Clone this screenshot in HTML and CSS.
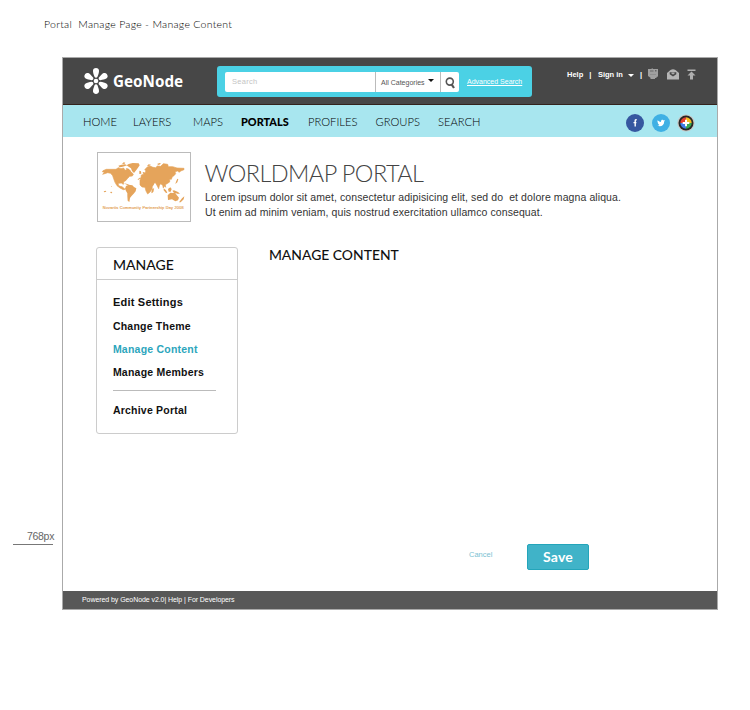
FILE: index.html
```html
<!DOCTYPE html>
<html lang="en">
<head>
<meta charset="utf-8">
<title>Portal Manage Page - Manage Content</title>
<link rel="stylesheet" href="styles.css">
</head>
<body>
<p class="caption">Portal&nbsp; Manage Page - Manage Content</p>
<div class="board">
  <div class="ruler"><span>768px</span></div>
  <div class="frame">
    <header class="top">
      <a class="brand">
        <svg width="26" height="28" viewBox="-13 -14 26 28">
          <g fill="#fff">
            <path id="petal" d="M-1.500-4.200C-2.200-6.5-3.200-8.500-3-10.600C-2.600-13.700 2.600-13.700 3-10.600C3.200-8.500 2.200-6.5 1.500-4.200C.8-3 -.8-3-1.500-4.200Z"/>
            <use href="#petal" transform="rotate(60)"/><use href="#petal" transform="rotate(120)"/>
            <use href="#petal" transform="rotate(180)"/><use href="#petal" transform="rotate(240)"/>
            <use href="#petal" transform="rotate(300)"/>
            <circle r="2.3"/>
          </g>
        </svg>
        <span>GeoNode</span>
      </a>
      <div class="search">
        <div class="field">
          <span class="query">Search</span>
          <span class="cats">All Categories<i class="caret"></i></span>
          <span class="go"><svg width="12" height="14" viewBox="0 0 12 14" fill="none" stroke="#555"><circle cx="4.800" cy="4.600" r="3.500" stroke-width="1.600"/><path d="M6.600 7.400l2.400 3.600" stroke-width="2.2"/></svg></span>
        </div>
        <a class="adv">Advanced Search</a>
      </div>
      <div class="user">
        <a class="help">Help</a><span class="bar">|</span><a class="sign">Sign in</a><i class="caret light"></i><span class="bar">|</span>
        <svg class="ic1" width="12" height="12" viewBox="0 0 12 12"><path d="M1 1h3.200l1-.8 1 .8H11v7.500L9.500 9v1H8v1H3.500V9.800L1 8z" fill="#a0a0a0"/><path d="M3 2.600h3.500v1H3zM8 2h1.500v1.500H8z" fill="#666"/><path d="M3 6.300h6v.7H3z" fill="#888"/></svg>
        <svg class="ic2" width="12" height="11" viewBox="0 0 12 11"><path d="M0 4L3.500 1Q6-.6 8.500 1L12 4V10.500H0z" fill="#b5b5b5"/><path d="M2.700 3.200h6.600v2L6 7.400 2.700 5.200z" fill="#474747"/><path d="M4.500 3.500h3v1.300L6 5.600 4.500 4.800z" fill="#aaa"/></svg>
        <svg class="ic3" width="9" height="11" viewBox="0 0 9 11"><path d="M.5.5h8v1.6h-8zM4.5 2.6l4 4H6V10.500H3V6.600H.5z" fill="#b0b0b0"/></svg>
      </div>
    </header>
    <nav class="nav">
      <a>HOME</a><a>LAYERS</a><a>MAPS</a><a class="on">PORTALS</a><a>PROFILES</a><a>GROUPS</a><a>SEARCH</a>
      <div class="social">
        <svg width="18" height="18" viewBox="0 0 18 18"><circle cx="9" cy="9" r="9" fill="#3657a0"/><path d="M10.700 5.800H9.900Q9.200 5.800 9.200 6.600V12.500M7.500 8.600h2.900" fill="none" stroke="#fff" stroke-width="1.4"/></svg>
        <svg width="18" height="18" viewBox="0 0 18 18"><circle cx="9" cy="9" r="9" fill="#3fb0e4"/><path d="M5.600 6.200Q7.200 7.900 9 7.900C8.800 5.500 11 5.300 11.700 6.400L13 6.100 12.200 7.400C12.300 11.600 8.600 13 5.400 11.600Q6.700 11.600 7.400 11L5.700 9.600 6.300 9.400Q5 8 5.600 6.200Z" fill="#fff"/></svg>
        <svg width="18" height="18" viewBox="0 0 18 18"><circle cx="9" cy="9" r="8.600" fill="#c9c4c0"/><circle cx="9" cy="9" r="7.500" fill="#262626"/><path d="M9 9V3.300A5.700 5.700 0 0 0 3.300 9z" fill="#e5402e"/><path d="M9 9V3.300A5.700 5.700 0 0 1 14.700 9z" fill="#f5bd22"/><path d="M9 9H3.300A5.700 5.700 0 0 0 9 14.700z" fill="#3f7ce8"/><path d="M9 9h5.700A5.700 5.700 0 0 1 9 14.700z" fill="#38a852"/><path d="M9 5.700v6.600M5.700 9h6.600" stroke="#fff" stroke-width="2"/></svg>
      </div>
    </nav>
    <section class="intro">
      <div class="thumb">
        <svg width="92" height="68" viewBox="24 24 276 204" fill="#e5a45b">
          <path stroke="#e5a45b" stroke-width="2" d="M39 77l10-4 14 0 15 0 7-5 8 3 8-2 4 7 9-4 4 6 6 3 6 7-3 5-8 1-7 7-5 6-6 3-1 8-6-4-9 1 0 6 5 3 6 1 5 4 4 4-5 1-10-5-9-7-6-10-4-11-3-9-6-7-9-2-9 3-6 2 5-6-6-2z"/>
          <path d="M85 62l10-3 10-1 6 3-8 3-8 2-6 1zM116 57l12-3 18 1 3 6-4 6-6 8-7 9-6-6-3-8-7-5-6-4zM107 69l9 2 7 7-2 4-8-5zM108 123l8-4 11 2 5 5 7 4-2 9-6 7-7 8-4 5-2 12-5-4-1-14 0-8-4-7-3-7z"/>
          <path stroke="#e5a45b" stroke-width="2" d="M150 104l6-5 12-2 7 4 8 0 5 8 7 2-5 8-3 5-1 8-6 9-7 6-5-9-3-11-9-1-6-6zM187 132l4-1-2 10-4 2z"/>
          <path stroke="#e5a45b" stroke-width="2" d="M153 98l1-8 7-2-2-6 6 2 3-7-4-3 8-8 8-3 9 4 8 1 5-5 10 1 8-8 13 2 2 7 13 0 13 4 21 1 0 4-10 4-4 4-5-4-8 2 2 6-5 6-5 3-3 8-5-1 0 9-8 5-5 3 1 8-4-4-3 6-2-8-6-5-4 6-2 9-4-8-5-9-7-3-5 0 6 5-4 7-9 2-7-9-1-9-8 0-7-4-6-4-5 5z"/>
          <path d="M148 77l5 2 1 7-6 1zM221 130l7 6 4 7-4 1-7-8zM234 132l7-5 4 5-3 8-6 0zM247 137l5-1 12 5 6 5-8 0-12-5zM233 151l8-8 8 1 5-3 6 9 7 8-3 8-8 3-10-6-12 2zM276 160l7-6-2 9-9 9-5 0zM258 110l4-9 3 2-3 9-6 5zM171 62l5-4 7 1-6 4zM201 57l8-3 4 2-7 4zM41 139l6-2 2 3-6 2zM60 141l5-1 2 4-4 1zM63 124l3-1 0 3zM101 115l11 2 6 3-6 0zM96 56l5-4 5 1-3 4z"/>
          <text x="38" y="193" font-size="11.500" textLength="243" stroke="#e5a45b" stroke-width=".5">Novartis Community Partnership Day 2008</text>
        </svg>
      </div>
      <div class="copy">
        <h1>WORLDMAP PORTAL</h1>
        <p>Lorem ipsum dolor sit amet, consectetur adipisicing elit, sed do&nbsp; et dolore magna aliqua.</p>
        <p>Ut enim ad minim veniam, quis nostrud exercitation ullamco consequat.</p>
      </div>
    </section>
    <main class="main">
      <aside class="menu">
        <h2>MANAGE</h2>
        <ul>
          <li class="m1">Edit Settings</li><li>Change Theme</li><li class="m3">Manage Content</li><li>Manage Members</li>
          <li class="m5">Archive Portal</li>
        </ul>
      </aside>
      <h2 class="title">MANAGE CONTENT</h2>
    </main>
    <div class="actions"><a>Cancel</a><button>Save</button></div>
    <footer class="foot">Powered by GeoNode v2.0| Help | For Developers</footer>
  </div>
</div>
</body>
</html>
```
FILE: styles.css
```css
* { box-sizing: border-box; }
body { margin: 0; width: 750px; height: 710px; background: #fff; color: #222; font-family: "Liberation Sans", Arial, sans-serif; overflow: hidden; }
h1, h2, p, ul { margin: 0; padding: 0; font-weight: 400; }
svg { display: block; flex: none; }
.caption { height: 57px; padding: 16px 0 0 44px; font: 300 10.500px/16px Lato, sans-serif; letter-spacing: .28px; color: #000; white-space: nowrap; }
.board { display: flex; height: 553px; }
.ruler { width: 62px; padding: 473px 9px 0 13px; }
.ruler span { display: block; height: 15px; border-bottom: 1px solid #777; padding-left: 14px; font-size: 10.500px; letter-spacing: -.3px; line-height: 13px; color: #666; white-space: nowrap; }
.frame { width: 656px; height: 553px; border: 1px solid #aaa; display: flex; flex-direction: column; }
.top { height: 47px; background: #474747; border-bottom: 1px solid #33231d; display: flex; align-items: flex-start; flex: none; }
.brand { display: flex; width: 154px; padding: 9px 0 0 20px; color: #fff; }
.brand span { font: 700 15.200px/28px "Noto Sans", sans-serif; margin-left: 4px; }
.search { width: 315px; height: 31px; margin-top: 8px; padding-left: 8px; background: #4bd1e5; border-radius: 3px; display: flex; align-items: center; }
.field { width: 234px; height: 20px; display: flex; background: #fff; border-radius: 2px; line-height: 21px; }
.query { width: 150px; padding-left: 7px; font-size: 7.500px; letter-spacing: .3px; color: #c4c4c4; line-height: 19px; }
.cats { width: 65px; border-left: 1px solid #bbb; padding-left: 5px; font-size: 7px; color: #555; display: flex; white-space: nowrap; }
.caret { width: 0; height: 0; border: 3px solid transparent; border-top: 3px solid #111; border-bottom: 0; margin: 7px 0 0 3px; }
.go { width: 19px; border-left: 1px solid #bbb; padding: 5px 0 0 4px; }
.adv { color: #fff; font-size: 7px; text-decoration: underline; margin-left: 8px; white-space: nowrap; }
.user { display: flex; align-items: center; margin: 10px 0 0 35px; height: 12px; color: #fff; font-size: 7.500px; font-weight: 700; white-space: nowrap; }
.bar { margin: 0 6.500px 0 6px; }
.caret.light { border-top-color: #fff; margin: 2px 0 0 5px; }
.ic1 { margin-left: -1px; }
.ic2, .ic3 { margin-left: 8px; }
.nav { height: 32px; padding-left: 20px; background: #a8e6ef; display: grid; grid-template-columns: 50px 60px 48px 67px 67.500px 62.500px 188px 1fr; align-items: center; flex: none; font: 300 11.200px/34px Lato, sans-serif; color: #000; }
.nav .on { font-weight: 900; font-size: 10.900px; }
.social { display: flex; gap: 8px; padding-top: 1px; }
.social svg:last-child { margin-left: -1px; }
.intro { display: flex; padding: 15px 0 0 34px; height: 110px; flex: none; }
.thumb { width: 94px; height: 70px; border: 1px solid #bbb; }
.copy { margin-left: 14px; white-space: nowrap; }
.copy h1 { font: 300 23.500px/28px Lato, sans-serif; letter-spacing: -.57px; margin: 7px 0 0 -.500px; height: 31px; color: #444; }
.copy p { font-size: 10.500px; line-height: 15px; letter-spacing: .09px; color: #333; }
.main { display: flex; padding-left: 34px; height: 297px; flex: none; }
.menu { width: 142px; height: 187px; margin-left: -.600px; border: 1px solid #ccc; border-radius: 3px; }
.menu h2 { height: 32px; border-bottom: 1px solid #ccc; padding-left: 15.500px; font: 500 14px/33px Lato, sans-serif; color: #111; }
.menu ul { list-style: none; padding: 12px 0 0 15.500px; width: 119px; }
.menu li { font-size: 10.500px; letter-spacing: .22px; font-weight: 700; height: 23px; line-height: 22px; white-space: nowrap; color: #111; }
.menu .m1 { font-size: 11px; letter-spacing: .22px; line-height: 21px; }
.menu .m3 { color: #2ca5bc; }
.menu .m5 { border-top: 1px solid #bbb; margin-top: 6px; height: 38px; line-height: 38px; }
.main .title { margin: 0 0 0 30.500px; font: 500 13.900px/15px Lato, sans-serif; color: #111; }
.actions { display: flex; padding-left: 406px; height: 47px; flex: none; }
.actions a { width: 58px; font-size: 7.500px; line-height: 21px; color: #7bbfd2; }
.actions button { width: 62px; height: 26px; padding: 0; border: 1px solid #24a5ba; border-radius: 2px; background: #40b3c8; color: #fff; font: 700 14px/22px Lato, sans-serif; letter-spacing: .2px; }
.foot { flex: 1; background: #585858; color: #fff; padding-left: 19px; font-size: 7px; letter-spacing: -.07px; line-height: 18px; }
```
